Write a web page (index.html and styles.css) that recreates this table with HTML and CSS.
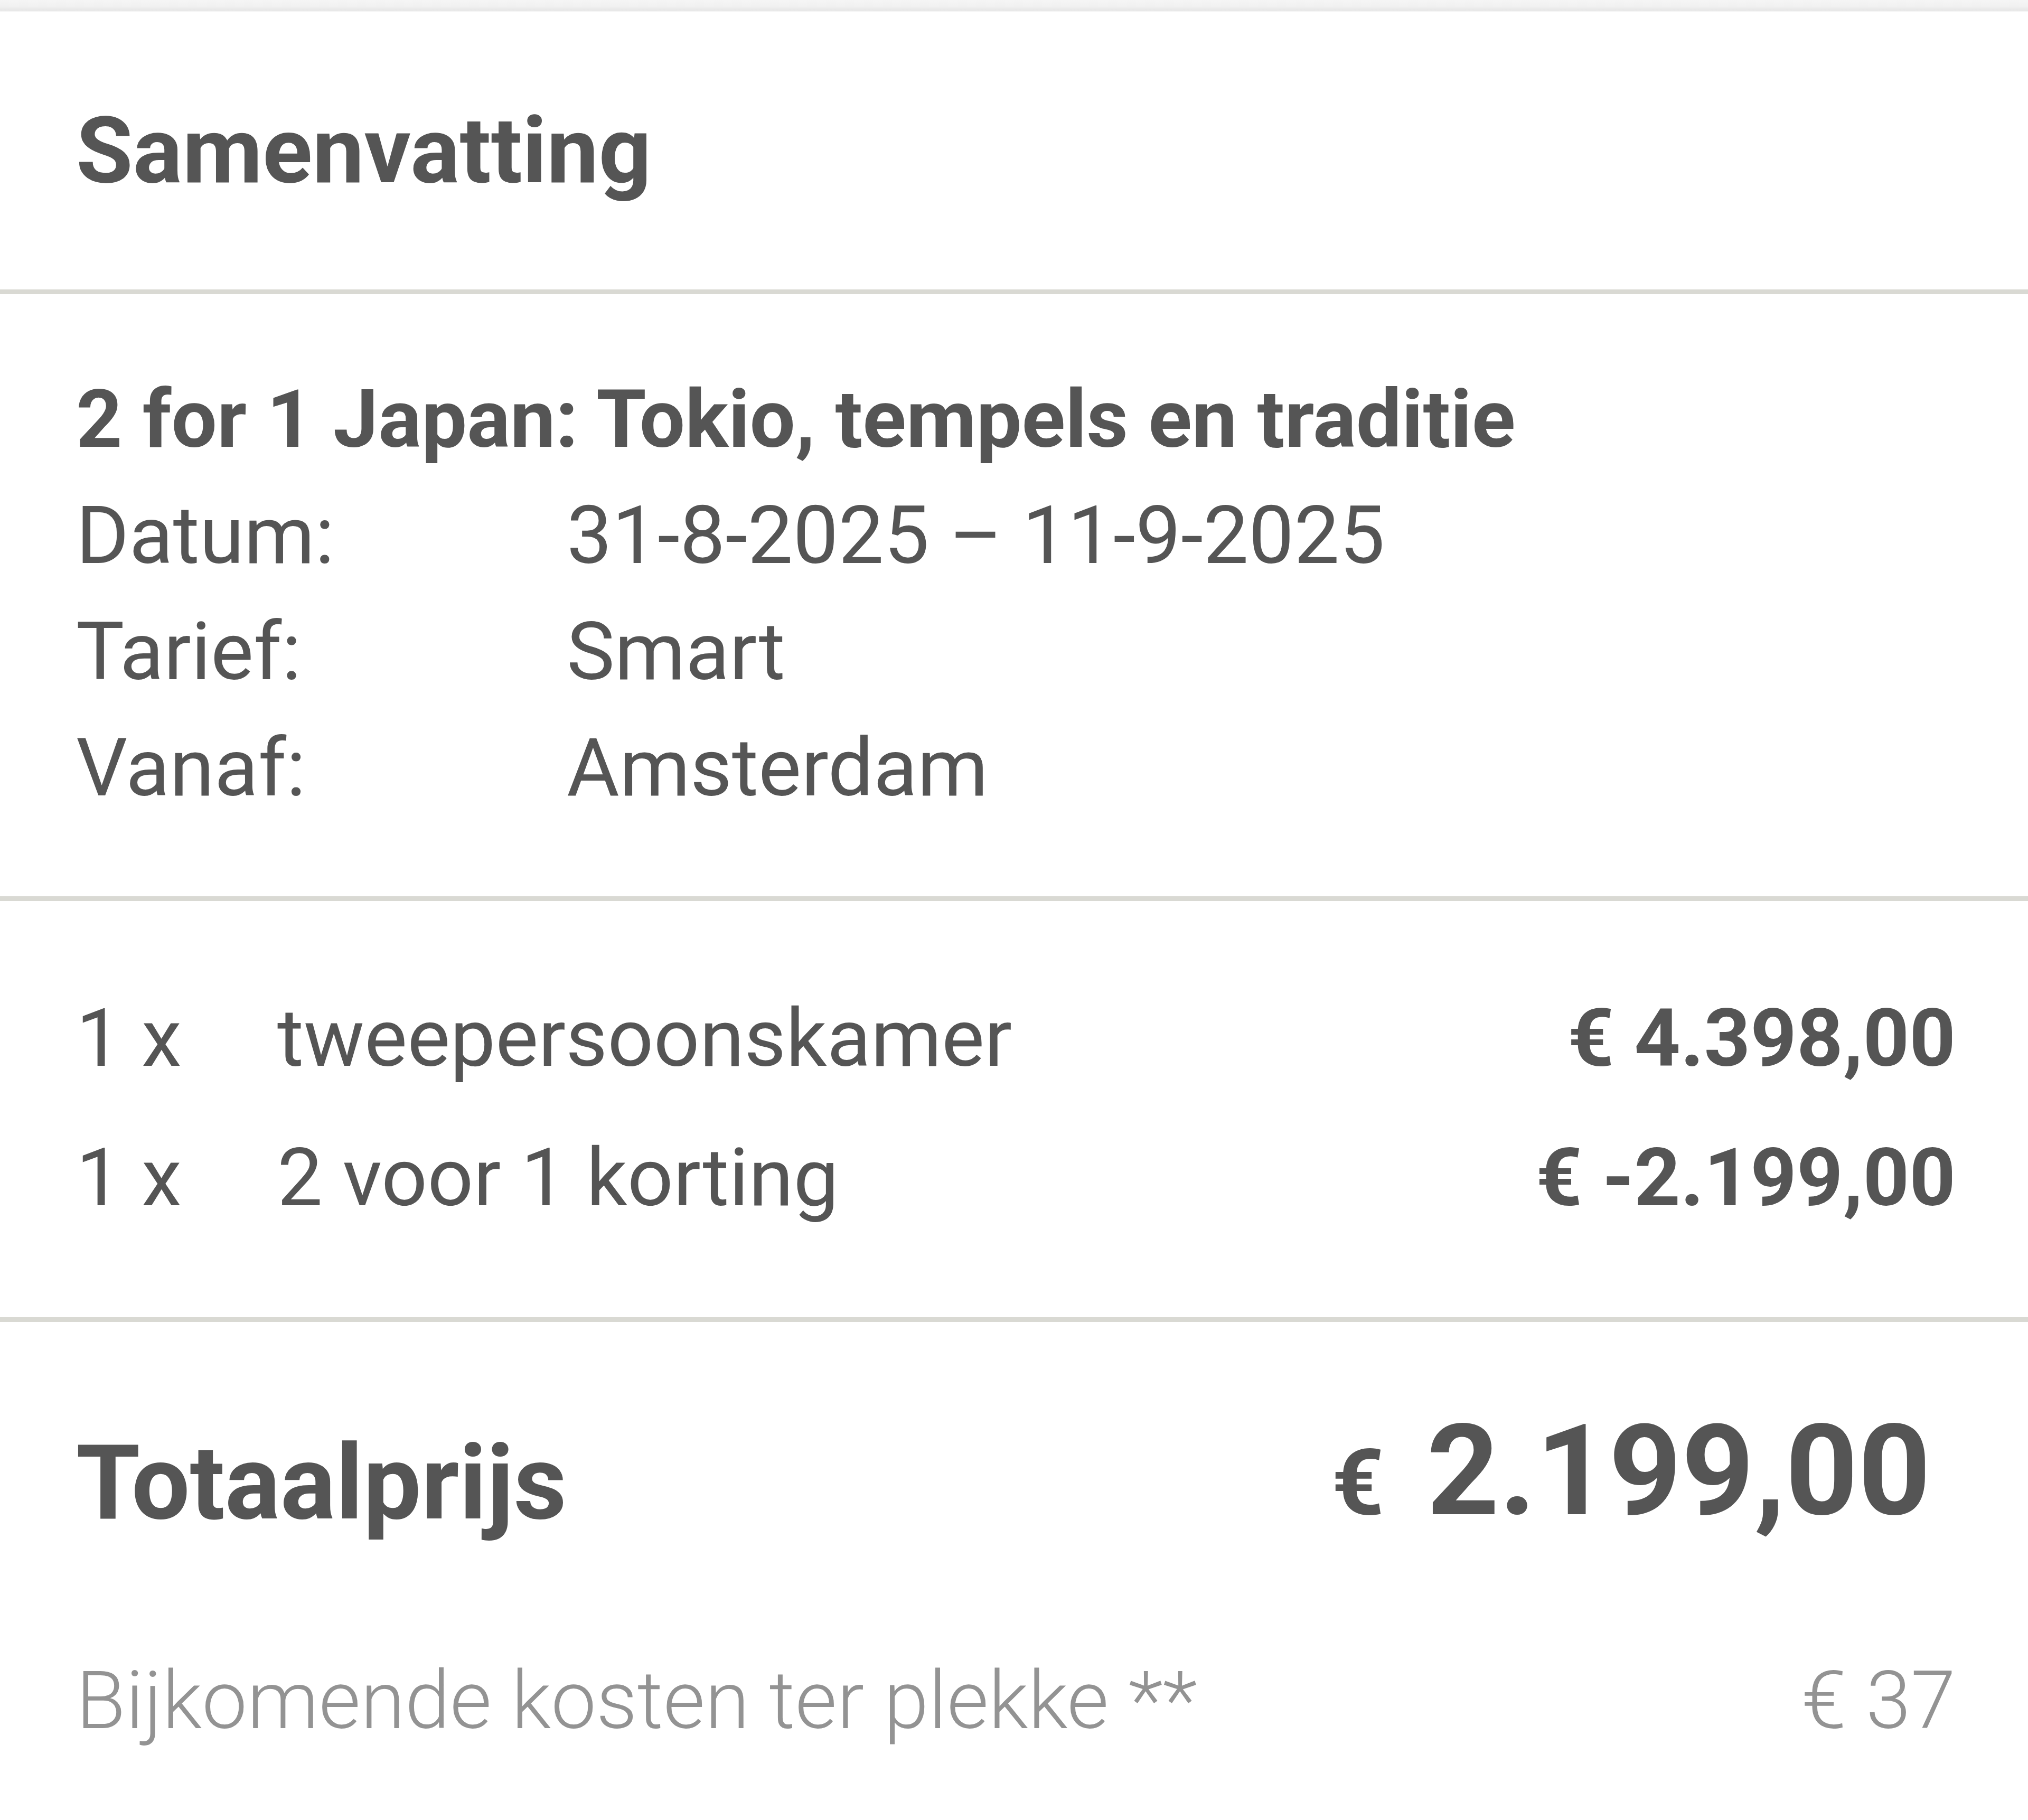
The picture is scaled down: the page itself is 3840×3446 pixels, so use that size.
FILE: index.html
```html
<!DOCTYPE html>
<html lang="nl">
<head>
<meta charset="utf-8">
<title>Samenvatting</title>
<link rel="stylesheet" href="styles.css">
</head>
<body>
<div class="summary">
  <div class="topbar"></div>
  <section class="sec sec-head">
    <h2 class="title">Samenvatting</h2>
  </section>
  <section class="sec sec-trip">
    <div class="trip-name">2 for 1 Japan: Tokio, tempels en traditie</div>
    <div class="info">
      <span class="label">Datum:</span><span class="value">31-8-2025 – 11-9-2025</span>
      <span class="label">Tarief:</span><span class="value">Smart</span>
      <span class="label">Vanaf:</span><span class="value">Amsterdam</span>
    </div>
  </section>
  <section class="sec sec-lines">
    <div class="line"><span class="qty">1 x</span><span class="desc">tweepersoonskamer</span><span class="amount">€ 4.398,00</span></div>
    <div class="line"><span class="qty">1 x</span><span class="desc">2 voor 1 korting</span><span class="amount">€ -2.199,00</span></div>
  </section>
  <section class="sec-total">
    <div class="total-row">
      <span class="total-label">Totaalprijs</span>
      <span class="total-price"><span class="cur">€</span>2.199,00</span>
    </div>
    <div class="extra-row">
      <span class="extra-label">Bijkomende kosten ter plekke **</span>
      <span class="extra-amount">€ 37</span>
    </div>
  </section>
</div>
</body>
</html>
```
FILE: styles.css
```css
html, body {
  margin: 0;
  padding: 0;
  background: #ffffff;
}
body {
  font-family: Roboto, "Liberation Sans", Arial, sans-serif;
  color: #555555;
}
.summary {
  width: 3840px;
  height: 3446px;
  background: #ffffff;
  overflow: hidden;
}
.topbar {
  height: 22px;
  background: linear-gradient(to bottom, #f5f5f5 0%, #f1f1f1 55%, #e6e6e6 90%, #f6f6f6 100%);
}
.sec {
  padding: 0 137px 0 144px;
  border-bottom: 9px solid #d9d9d3;
}
.sec-head {
  padding-top: 161px;
  padding-bottom: 159px;
}
.title {
  margin: 0;
  font-size: 175px;
  line-height: 206px;
  font-weight: 700;
  color: #555555;
}
.sec-trip {
  padding-top: 127px;
  padding-bottom: 133px;
  font-size: 153px;
  line-height: 220px;
}
.trip-name {
  font-weight: 700;
}
.info {
  display: grid;
  grid-template-columns: 929px 1fr;
}
.sec-lines {
  padding-top: 128px;
  padding-bottom: 132px;
  font-size: 153px;
  line-height: 264px;
}
.line {
  display: grid;
  grid-template-columns: 381px 1fr auto;
}
.amount {
  font-weight: 700;
  text-align: right;
}
.sec-total {
  padding: 141px 137px 0 144px;
}
.total-row {
  display: flex;
  justify-content: space-between;
  align-items: flex-end;
}
.total-label {
  font-size: 196px;
  line-height: 281px;
  font-weight: 700;
}
.total-price {
  font-size: 240px;
  line-height: 282px;
  font-weight: 700;
  margin-right: 47px;
}
.cur {
  font-size: 174px;
  margin-right: 80px;
}
.extra-row {
  display: flex;
  justify-content: space-between;
  margin-top: 161px;
  font-size: 153px;
  line-height: 220px;
  font-weight: 300;
  color: #939393;
}
```
